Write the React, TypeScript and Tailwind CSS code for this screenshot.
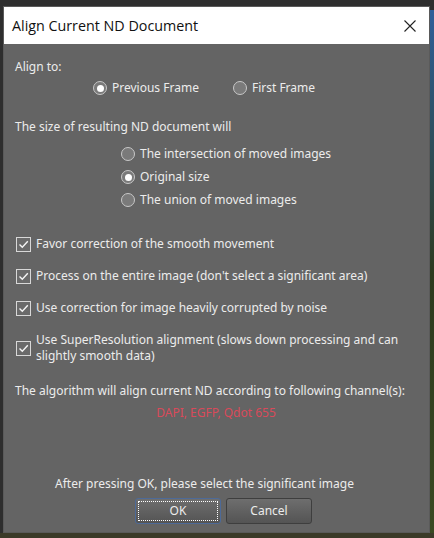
import React from "react";

const font = { fontFamily: '"Noto Sans", "Open Sans", sans-serif' };

function Radio({ checked, label }: { checked?: boolean; label: string }) {
  return (
    <div className="flex items-center h-4">
      <div className="w-[14px] h-[14px] rounded-full border border-[#c8c8c8] bg-[#7a7a7a] flex items-center justify-center shrink-0">
        {checked && <div className="w-[7px] h-[7px] rounded-full bg-white" />}
      </div>
      <span className="ml-[5px] text-[12px] leading-4 text-[#ececec]">{label}</span>
    </div>
  );
}

function Check({ children, tall }: { children: React.ReactNode; tall?: boolean }) {
  return (
    <div className="flex items-center">
      <div className="w-[15px] h-[15px] border border-[#d8d8d8] bg-[#6a6a6a] flex items-center justify-center shrink-0">
        <svg width="11" height="11" viewBox="0 0 11 11">
          <path d="M1.5 5.5 L4.3 8.3 L9.8 2.2" fill="none" stroke="#f4f4f4" strokeWidth="1.4" />
        </svg>
      </div>
      <div className={"ml-[5px] text-[12px] text-[#ececec] " + (tall ? "leading-[16px]" : "leading-4")}>{children}</div>
    </div>
  );
}

export default function App() {
  return (
    <div className="w-[434px] h-[538px] bg-[#2e2e2e] relative overflow-hidden" style={font}>
      <div className="absolute right-0 top-[10px] w-[4px] h-[528px] bg-gradient-to-b from-[#2f5f9a] via-[#2d3a1e] to-[#3a4a22]" />
      <div className="absolute left-0 right-0 bottom-0 h-[5px] bg-[#3b3a28]" />
      <div className="absolute left-[3px] top-[6px] w-[427px] h-[527px] flex flex-col border border-[#5a5a5a]">
        <div className="h-[37px] bg-white flex items-center justify-between pl-[8px] pr-[13px] shrink-0">
          <span className="text-[14.3px] text-[#111] leading-5" style={{ fontFamily: '"Open Sans", "Noto Sans", sans-serif' }}>Align Current ND Document</span>
          <svg width="12" height="12" viewBox="0 0 12 12">
            <path d="M0.5 0.5 L11.5 11.5 M11.5 0.5 L0.5 11.5" stroke="#222" strokeWidth="1.1" />
          </svg>
        </div>
        <div className="flex-1 bg-[#646464] flex flex-col pl-[11px] pr-[8px]">
          <div className="mt-[15px] text-[12px] leading-4 text-[#ececec]">Align to:</div>
          <div className="mt-[5px] flex pl-[78px] gap-[34px]">
            <Radio checked label="Previous Frame" />
            <Radio label="First Frame" />
          </div>
          <div className="mt-[23px] text-[12px] leading-4 text-[#ececec]">The size of resulting ND document will</div>
          <div className="mt-[11px] flex flex-col gap-[7px] pl-[106px]">
            <Radio label="The intersection of moved images" />
            <Radio checked label="Original size" />
            <Radio label="The union of moved images" />
          </div>
          <div className="mt-[28px] flex flex-col gap-[16px] pl-[1px]">
            <Check>Favor correction of the smooth movement</Check>
            <Check>Process on the entire image (don't select a significant area)</Check>
            <Check>Use correction for image heavily corrupted by noise</Check>
            <Check tall>
              Use SuperResolution alignment (slows down processing and can
              <br />
              slightly smooth data)
            </Check>
          </div>
          <div className="mt-[19px] text-[12px] leading-4 text-[#ececec] whitespace-nowrap">
            The algorithm will align current ND according to following channel(s):
          </div>
          <div className="mt-[6px] text-[12px] leading-4 text-[#d94a5a] text-center pr-[4px]">DAPI, EGFP, Qdot 655</div>
          <div className="mt-[55px] text-[12px] leading-4 text-[#ececec] text-center pr-[27px]">
            After pressing OK, please select the significant image
          </div>
          <div className="mt-[6px] flex justify-center gap-[5px] pl-[11px]">
            <div className="w-[86px] h-[26px] rounded-[3px] border border-[#4d6a98] bg-gradient-to-b from-[#6e6e6e] to-[#545454] p-[2px]">
              <div className="w-full h-full border border-dotted border-white flex items-center justify-center text-[12px] text-[#ececec]">OK</div>
            </div>
            <div className="w-[86px] h-[26px] rounded-[3px] border border-[#3e3e3e] bg-gradient-to-b from-[#6e6e6e] to-[#545454] flex items-center justify-center text-[12px] text-[#ececec]">
              Cancel
            </div>
          </div>
        </div>
      </div>
    </div>
  );
}
